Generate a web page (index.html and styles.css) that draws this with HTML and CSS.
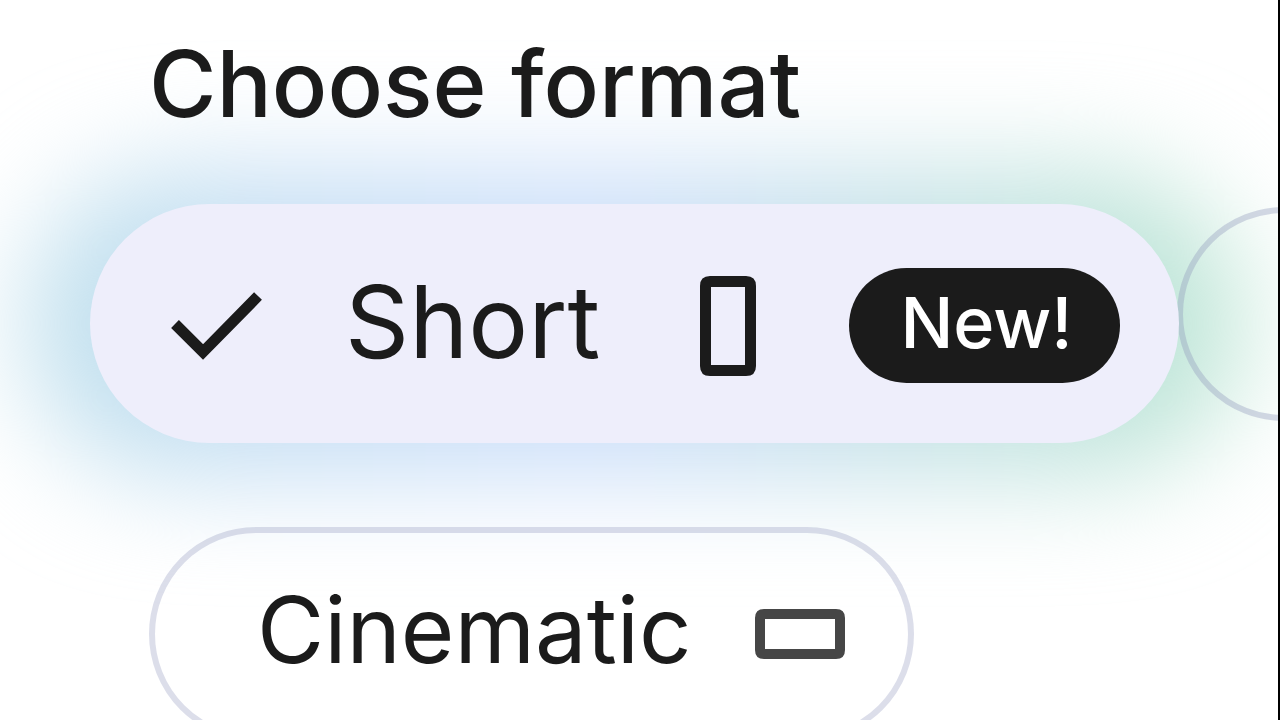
FILE: index.html
```
<!DOCTYPE html>
<html lang="en">
<head>
    <meta charset="UTF-8">
    <meta name="viewport" content="width=device-width, initial-scale=1.0">
    <title>Choose format</title>
    <link rel="stylesheet" href="styles.css">
</head>
<body>
    <main class="page">
        <h1 class="title" id="format-title">Choose format</h1>

        <form class="formats" role="radiogroup" aria-labelledby="format-title">
            <div class="format-row">
                <label class="chip chip-selected">
                    <input class="chip-input" type="radio" name="format" value="short" checked>
                    <svg class="check-icon" viewBox="0 0 92 68" aria-hidden="true">
                        <path d="M4 32 L32 60 L87 4" fill="none" stroke="currentColor" stroke-width="11"/>
                    </svg>
                    <span class="chip-text">Short</span>
                    <svg class="portrait-icon" viewBox="0 0 58 102" aria-hidden="true">
                        <path fill="currentColor" fill-rule="evenodd" d="M11 1H47Q57 1 57 11V91Q57 101 47 101H11Q1 101 1 91V11Q1 1 11 1ZM12 12V90H46V12Z"/>
                    </svg>
                    <span class="badge">New!</span>
                </label>
                <label class="chip chip-next">
                    <input class="chip-input" type="radio" name="format" value="next">
                </label>
            </div>

            <div class="format-row">
                <label class="chip chip-cinematic">
                    <input class="chip-input" type="radio" name="format" value="cinematic">
                    <span class="chip-text">Cinematic</span>
                    <svg class="landscape-icon" viewBox="0 0 92 52" aria-hidden="true">
                        <path fill="currentColor" fill-rule="evenodd" d="M10 1H82Q91 1 91 10V42Q91 51 82 51H10Q1 51 1 42V10Q1 1 10 1ZM11 11V41H81V11Z"/>
                    </svg>
                </label>
            </div>
        </form>
    </main>
</body>
</html>
```

FILE: styles.css
```
* {
    box-sizing: border-box;
}
body {
    margin: 0;
    background-color: #fff;
    color: #1b1b1b;
    font-family: Inter, "Liberation Sans", sans-serif;
}
.page {
    height: 100vh;
    overflow: hidden;
    padding: 36px 0 0 90px;
    border-right: 2px solid #000;
}
.title {
    position: relative;
    z-index: 1;
    margin: 0 0 72px 59px;
    font-size: 92px;
    font-weight: 500;
    line-height: 96px;
}
.formats {
    display: flex;
    flex-direction: column;
    gap: 84px;
}
.format-row {
    display: flex;
}
.chip {
    position: relative;
    display: flex;
    flex-shrink: 0;
    align-items: center;
    height: 214px;
    border: 6px solid rgba(140, 145, 185, 0.3);
    border-radius: 120px;
    cursor: pointer;
}
.chip-input {
    position: absolute;
    opacity: 0;
}
.chip-text {
    padding-bottom: 8px;
    font-size: 92px;
    line-height: 96px;
}
.chip-selected {
    width: 1089px;
    height: 239px;
    padding: 4px 0 0 81px;
    border: none;
    background-color: #eeeefb;
}
.chip-selected .chip-text {
    width: 264px;
    margin: 0 90px 0 82px;
    font-size: 100px;
}
/* soft glow around the selected option */
.chip-selected::before {
    content: "";
    position: absolute;
    inset: -34px -64px;
    z-index: -1;
    border-radius: 150px;
    background: linear-gradient(90deg, #bfe0ec 0%, #c5def4 22%, #cbdefa 48%, #c3e1e6 72%, #bce6d3 100%);
    filter: blur(54px);
}
.check-icon {
    width: 92px;
    height: 68px;
}
.portrait-icon {
    width: 58px;
    height: 102px;
    margin-right: 92px;
}
.badge {
    width: 271px;
    height: 115px;
    padding-left: 4px;
    border-radius: 60px;
    background-color: #1b1b1b;
    color: #fff;
    font-size: 70px;
    font-weight: 500;
    line-height: 110px;
    text-align: center;
}
.chip-next {
    width: 700px;
    margin: 3px 0 0 -2px;
    border-color: rgba(140, 150, 185, 0.36);
    z-index: -1;
}
.chip-cinematic {
    width: 765px;
    margin-left: 59px;
    padding: 0 62px 0 102px;
    justify-content: space-between;
}
.landscape-icon {
    width: 92px;
    height: 52px;
    color: #464646;
}
```
